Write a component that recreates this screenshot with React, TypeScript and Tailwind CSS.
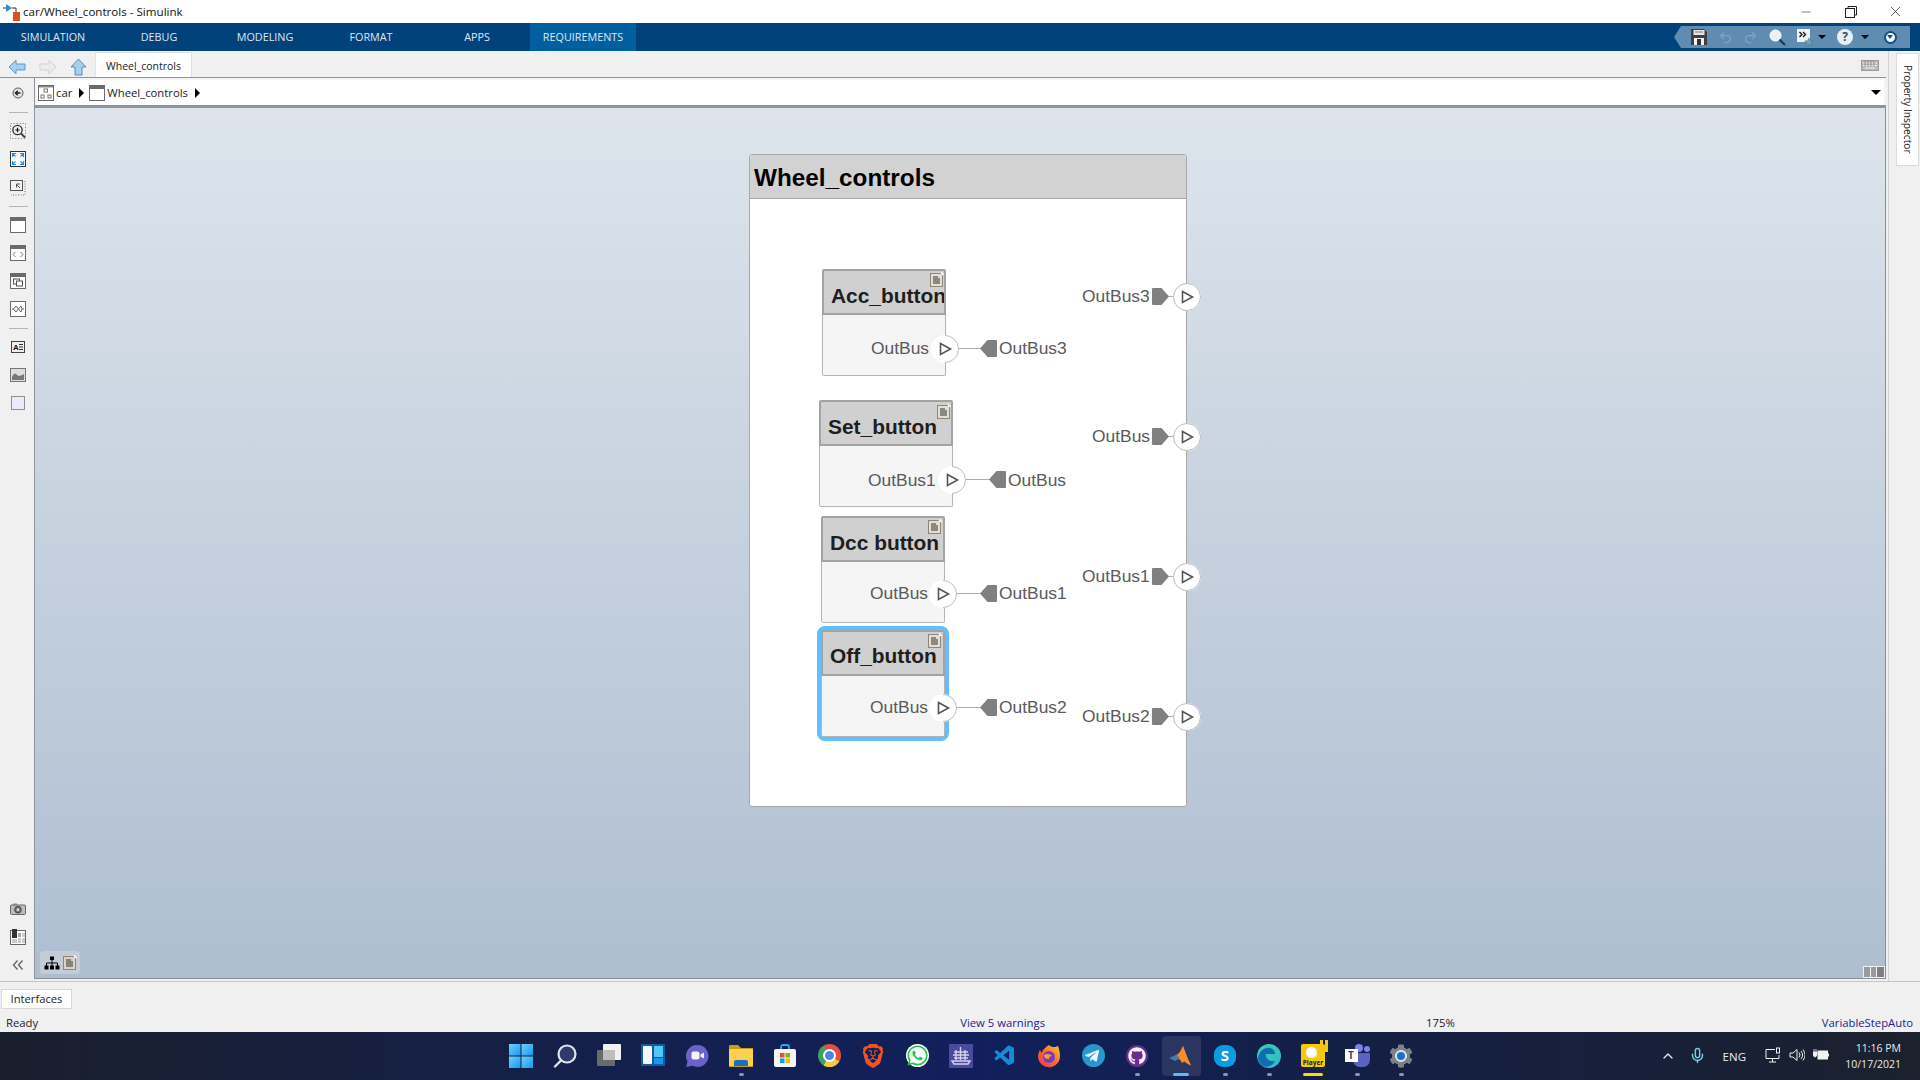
import React from "react";
import { Undo2, Redo2, Minus, X, ChevronUp, Mic } from "lucide-react";
import { FaWhatsapp, FaTelegramPlane, FaGithub, FaCog } from "react-icons/fa";
import { VscVscode } from "react-icons/vsc";
import { SiBrave } from "react-icons/si";

const Svg = ({ s = 16, h, children, className }: { s?: number; h?: number; children: React.ReactNode; className?: string }) => (
  <svg width={s} height={h ?? s} viewBox={`0 0 ${s} ${h ?? s}`} className={className} fill="none">
    {children}
  </svg>
);

function Note({ className }: { className: string }) {
  return (
    <div className={`absolute ${className}`}>
      <Svg s={14} h={15}>
        <rect x="0.5" y="1.5" width="12" height="13" fill="#e4dfd2" stroke="#8f8878" />
        <path d="M3 5h5M3 7h7M3 9h7M3 11h7" stroke="#333" />
        <path d="M11 0.5l2.5 2.5" stroke="#fff" strokeWidth="1.5" />
      </Svg>
    </div>
  );
}

function Port({ className, full }: { className: string; full?: boolean }) {
  return (
    <div className={`absolute w-[28px] h-[28px] ${className}`}>
      <Svg s={28}>
        <circle cx="14" cy="14" r="14" fill="#fff" />
        {full ? (
          <circle cx="14" cy="14" r="13.5" stroke="#bbbbbb" />
        ) : (
          <path d="M14 .5a13.5 13.5 0 0 1 0 27" stroke="#bbbbbb" />
        )}
        <path d="M9.5 8.5L19.5 14L9.5 19.5Z" stroke="#555555" strokeWidth="1.6" strokeLinejoin="miter" fill="#fff" />
      </Svg>
    </div>
  );
}

function Tag({ className, dir }: { className: string; dir: "l" | "r" }) {
  return (
    <div className={`absolute ${className}`}>
      <Svg s={17}>
        {dir === "r" ? (
          <path d="M1 0H9.5L17 8.5L9.5 17H1a1 1 0 0 1-1-1V1a1 1 0 0 1 1-1Z" fill="#808080" />
        ) : (
          <path d="M16 0H7.5L0 8.5L7.5 17H16a1 1 0 0 0 1-1V1a1 1 0 0 0-1-1Z" fill="#808080" />
        )}
      </Svg>
    </div>
  );
}

function Label({ className, children }: { className: string; children: React.ReactNode }) {
  return <div className={`absolute h-[22px] leading-[22px] text-[17.4px] text-[#5a5a5a] whitespace-nowrap ${className}`}>{children}</div>;
}

function Wire({ className }: { className: string }) {
  return <div className={`absolute h-px bg-[#adadad] ${className}`} />;
}

function Block({ className, title, nudge = "pt-[7px]" }: { className: string; title: string; nudge?: string }) {
  return (
    <div className={`absolute flex flex-col rounded-[2px] ${className}`}>
      <div className={`h-[46px] shrink-0 flex items-center overflow-hidden bg-[#d0d0d0] border-2 border-[#a3a3a3] rounded-t-[2px] pl-[7px] ${nudge}`}>
        <span className="text-[20.9px] font-bold text-[#1e1e1e] whitespace-nowrap">{title}</span>
      </div>
      <div className="flex-1 bg-[#f5f5f5] border border-t-0 border-[#b5b5b5] rounded-b-[2px]" />
    </div>
  );
}

function Side({ children }: { children: React.ReactNode }) {
  return <div className="h-[28px] w-full flex items-center justify-center">{children}</div>;
}
const Sep = ({ h }: { h: string }) => (
  <div className={`${h} w-full flex items-center justify-center`}>
    <div className="w-[19px] h-px bg-[#b5b5b5]" />
  </div>
);

const WinFrame = ({ children }: { children?: React.ReactNode }) => (
  <Svg s={16}>
    <rect x=".5" y=".5" width="15" height="15" fill="#fff" stroke="#6b6b6b" />
    <rect x="1" y="1" width="14" height="3" fill="#6b6b6b" />
    {children}
  </Svg>
);

function Sidebar() {
  return (
    <div className="w-[34px] shrink-0 flex flex-col pt-px pl-[2px]">
      <Side>
        <Svg s={12}>
          <circle cx="6" cy="6" r="5" fill="#e5e5e5" stroke="#5c5c5c" />
          <path d="M8.5 6H4M5.8 3.8L3.4 6l2.4 2.2" stroke="#222" strokeWidth="1.4" />
        </Svg>
      </Side>
      <Sep h="h-[10px]" />
      <Side>
        <Svg s={16}>
          <rect x=".5" y=".5" width="15" height="15" stroke="#999" strokeDasharray="1.5 1.5" />
          <circle cx="7.5" cy="7" r="4.6" fill="#f4f4f4" stroke="#333" strokeWidth="1.4" />
          <path d="M5.3 7h4.4M7.5 4.8v4.4" stroke="#111" strokeWidth="1.2" />
          <path d="M11 10.5l4 4" stroke="#444" strokeWidth="2" />
        </Svg>
      </Side>
      <Side>
        <Svg s={16}>
          <rect x=".5" y=".5" width="15" height="15" fill="#fff" stroke="#333" />
          <path d="M2.5 6V2.500h3.500M10 2.500h3.500V6M13.500 10v3.500H10M6 13.500H2.500V10M3 3l2.500 2.500M13 3l-2.500 2.500M13 13l-2.500-2.500M3 13l2.500-2.500" stroke="#1e88e5" strokeWidth="1.200" />
        </Svg>
      </Side>
      <Side>
        <div className="mt-[2px]">
          <Svg s={16}>
            <rect x=".5" y=".5" width="12" height="10" fill="#f2f2f2" stroke="#555" />
            <path d="M10 8L6 4M6.5 7.5V4h3.5" stroke="#555" />
            <path d="M15 1v14H1" stroke="#777" strokeDasharray="1 1.5" />
          </Svg>
        </div>
      </Side>
      <Sep h="h-[10px]" />
      <Side><WinFrame /></Side>
      <Side>
        <WinFrame>
          <path d="M5.5 7L3 9.5 5.5 12M10.5 7L13 9.5 10.5 12" stroke="#777" />
        </WinFrame>
      </Side>
      <Side>
        <WinFrame>
          <rect x="3.5" y="6" width="6" height="5" fill="#fff" stroke="#555" />
          <rect x="6.5" y="8" width="6" height="5" fill="#fff" stroke="#555" />
        </WinFrame>
      </Side>
      <Side>
        <Svg s={16}>
          <rect x=".5" y=".5" width="15" height="15" fill="#fff" stroke="#6b6b6b" />
          <path d="M2 8h1.500L6 5l2.500 3L11 5l1 3h2M6 11L3.500 8M6 11l2.500-3M11 11l-2.500-3M11 11l1-3" stroke="#666" />
        </Svg>
      </Side>
      <Sep h="h-[10px]" />
      <Side>
        <Svg s={14} h={12}>
          <rect x=".5" y=".5" width="13" height="11" fill="#eee" stroke="#444" />
          <text x="2" y="9" fontSize="8" fontWeight="700" fill="#111" fontFamily="Liberation Sans">A</text>
          <path d="M8 3.5h4M8 6h4M8 8.5h4" stroke="#333" />
        </Svg>
      </Side>
      <Side>
        <Svg s={16} h={14}>
          <rect x=".5" y=".5" width="15" height="13" fill="#ddd" stroke="#777" />
          <path d="M2 9q2-5 4-3t3 2 5-2v6H2Z" fill="#777" />
        </Svg>
      </Side>
      <Side>
        <div className="w-[14px] h-[14px] bg-[#eaeafa] border border-[#8f8f8f]" />
      </Side>
      <div className="mt-auto" />
      <Side>
        <Svg s={16} h={12}>
          <rect x=".5" y="2" width="15" height="9.5" rx="1" fill="#bdbdbd" stroke="#666" />
          <rect x="3" y=".5" width="4" height="2" fill="#888" />
          <circle cx="8" cy="6.7" r="3.3" fill="#777" stroke="#444" />
          <circle cx="8" cy="6.7" r="1.3" fill="#ddd" />
        </Svg>
      </Side>
      <Side>
        <Svg s={16}>
          <rect x=".5" y="1.5" width="15" height="14" fill="#fff" stroke="#666" />
          <rect x="8" y="4" width="3" height="4" fill="#aaa" /><rect x="12" y="4" width="3" height="4" fill="#ccc" />
          <rect x="8" y="9" width="3" height="5" fill="#ccc" /><rect x="12" y="9" width="3" height="5" fill="#ccc" />
          <rect x="2" y="0" width="5" height="9" fill="#333" /><rect x="2" y="10" width="5" height="4" fill="#ccc" />
        </Svg>
      </Side>
      <Side>
        <Svg s={12}>
          <path d="M5.5 1.5L1.5 6l4 4.5M10.5 1.5L6.5 6l4 4.5" stroke="#666" strokeWidth="1.4" />
        </Svg>
      </Side>
    </div>
  );
}

function Nav() {
  const arrow = (fill: string, stroke: string, d: string) => (
    <Svg s={18} h={16}><path d={d} fill={fill} stroke={stroke} /></Svg>
  );
  return (
    <div className="h-[27px] shrink-0 flex items-end border-b border-[#8e9499]">
      <div className="ml-[8px] h-[26px] pt-[5px] flex items-center">{arrow("#a7d0ec", "#5d9ac8", "M8 1L1 8l7 7v-4h9V5H8Z")}</div>
      <div className="ml-[13px] h-[26px] pt-[5px] flex items-center">{arrow("#ececec", "#d2d2d2", "M10 1l7 7-7 7v-4H1V5h9Z")}</div>
      <div className="ml-[13px] h-[26px] pt-[5px] flex items-center">
        <Svg s={17} h={18}><path d="M8.5 1L16 9h-4v8H5V9H1Z" fill="#a7d0ec" stroke="#4f8fc0" /></Svg>
      </div>
      <div className="ml-[8px] w-[97px] h-[25px] pt-[4px] bg-white border-x border-t border-[#e2e2e2] flex items-center justify-center text-[10.500px] text-[#222]">Wheel_controls</div>
      <div className="ml-auto mr-[7px] mb-[6px]">
        <Svg s={18} h={11}>
          <rect x=".5" y=".5" width="17" height="10" fill="#b9b9b9" stroke="#9a9a9a" />
          <path d="M2 3h14M2 5.500h14M4 8h10" stroke="#f2f2f2" />
          <path d="M4 1v5M7 1v5M10 1v5M13 1v5" stroke="#8a8a8a" />
        </Svg>
      </div>
    </div>
  );
}

function Address() {
  return (
    <div className="h-[30px] shrink-0 bg-[#f4f4f4] pt-[2px] pb-[3px] px-[2px] border-b-[3px] border-[#8d969f] flex">
      <div className="flex-1 bg-white flex items-center text-[11.300px] text-[#222] h-[25px] pt-px">
        <div className="ml-px">
          <Svg s={16}>
            <rect x=".5" y=".5" width="15" height="15" fill="#fff" stroke="#666" />
            <rect x="1" y="1" width="14" height="1.5" fill="#888" />
            <rect x="6" y="4" width="3.500" height="3" stroke="#777" />
            <rect x="3" y="10" width="3" height="3" stroke="#777" />
            <rect x="10" y="10" width="3" height="3" stroke="#777" />
          </Svg>
        </div>
        <span className="ml-[2px]">car</span>
        <div className="ml-[7px] w-0 h-0 border-y-[5px] border-y-transparent border-l-[5px] border-l-black" />
        <div className="ml-[5px]"><WinFrame /></div>
        <span className="ml-[2px]">Wheel_controls</span>
        <div className="ml-[7px] w-0 h-0 border-y-[5px] border-y-transparent border-l-[5px] border-l-black" />
        <div className="ml-auto mr-[3px] mb-[2px] w-0 h-0 border-x-[5px] border-x-transparent border-t-[5px] border-t-black" />
      </div>
    </div>
  );
}

function Diagram() {
  return (
    <>
      <div className="absolute left-[714px] top-[46px] w-[438px] h-[653px] bg-white border border-[#a8a8a8] rounded-[3px] overflow-hidden">
        <div className="h-[44px] bg-[#d2d2d2] border-b border-[#a8a8a8] flex items-center pl-[4px] pt-[4px]">
          <span className="text-[24.3px] font-bold text-black">Wheel_controls</span>
        </div>
      </div>

      <Block className="left-[787px] top-[161px] w-[124px] h-[107px]" title="Acc_button" />
      <Block className="left-[784px] top-[292px] w-[134px] h-[107px]" title="Set_button" />
      <Block className="left-[786px] top-[408px] w-[124px] h-[107px]" title="Dcc button" />
      <Block className="left-[786px] top-[522px] w-[124px] h-[107px] outline-4 outline-[#62bfff] rounded-[4px]" title="Off_button" nudge="pt-[5px]" />

      <Note className="left-[895px] top-[164px]" />
      <Note className="left-[902px] top-[296px]" />
      <Note className="left-[893px] top-[411px]" />
      <Note className="left-[893px] top-[525px]" />

      <Label className="left-[836px] top-[229px]">OutBus</Label>
      <Label className="left-[833px] top-[361px]">OutBus1</Label>
      <Label className="left-[835px] top-[474px]">OutBus</Label>
      <Label className="left-[835px] top-[588px]">OutBus</Label>

      <Wire className="left-[924px] w-[22px] top-[240px]" />
      <Wire className="left-[931px] w-[24px] top-[371px]" />
      <Wire className="left-[922px] w-[24px] top-[485px]" />
      <Wire className="left-[922px] w-[24px] top-[599px]" />

      <Port className="left-[896px] top-[227px]" />
      <Port className="left-[903px] top-[358px]" />
      <Port className="left-[894px] top-[472px]" />
      <Port className="left-[894px] top-[586px]" />

      <Tag dir="l" className="left-[945px] top-[232px]" />
      <Tag dir="l" className="left-[954px] top-[363px]" />
      <Tag dir="l" className="left-[945px] top-[477px]" />
      <Tag dir="l" className="left-[945px] top-[591px]" />

      <Label className="left-[964px] top-[229px]">OutBus3</Label>
      <Label className="left-[973px] top-[361px]">OutBus</Label>
      <Label className="left-[964px] top-[474px]">OutBus1</Label>
      <Label className="left-[964px] top-[588px]">OutBus2</Label>

      <Label className="left-[1047px] top-[177px]">OutBus3</Label>
      <Label className="left-[1057px] top-[317px]">OutBus</Label>
      <Label className="left-[1047px] top-[457px]">OutBus1</Label>
      <Label className="left-[1047px] top-[597px]">OutBus2</Label>

      <Tag dir="r" className="left-[1117px] top-[180px]" />
      <Tag dir="r" className="left-[1117px] top-[320px]" />
      <Tag dir="r" className="left-[1117px] top-[460px]" />
      <Tag dir="r" className="left-[1117px] top-[600px]" />

      <Wire className="left-[1134px] w-[5px] top-[188px]" />
      <Wire className="left-[1134px] w-[5px] top-[328px]" />
      <Wire className="left-[1134px] w-[5px] top-[468px]" />
      <Wire className="left-[1134px] w-[5px] top-[608px]" />

      <Port full className="left-[1138px] top-[175px]" />
      <Port full className="left-[1138px] top-[315px]" />
      <Port full className="left-[1138px] top-[455px]" />
      <Port full className="left-[1138px] top-[595px]" />

      <div className="absolute left-[5px] top-[843px] w-[40px] h-[23px] rounded-[4px] bg-[#c3ccd7] flex items-center justify-center gap-[3px]">
        <Svg s={16} h={14}>
          <rect x="6" y="0.500" width="4" height="3.500" fill="#000" />
          <path d="M8 4v3M2.500 10V7h11v3M8 7v3" stroke="#000" />
          <rect x="0.500" y="9.500" width="4" height="4" fill="#000" /><rect x="6" y="9.500" width="4" height="4" fill="#000" /><rect x="11.500" y="9.500" width="4" height="4" fill="#000" />
        </Svg>
        <Svg s={14} h={15}>
          <rect x="0.500" y="1.500" width="12" height="13" fill="#d9d4c6" stroke="#8f8878" />
          <path d="M3 5h5M3 7h7M3 9h7M3 11h7" stroke="#333" />
          <path d="M11 0.500l2.500 2.500" stroke="#fff" strokeWidth="1.500" />
        </Svg>
      </div>

      <div className="absolute right-0 bottom-0 w-[22px] h-[12px] bg-white/80 flex gap-px p-px">
        <div className="w-[6px] bg-[#9a9a9a]" /><div className="w-[5px] bg-[#9a9a9a]" /><div className="flex-1 bg-[#808080]" />
      </div>
    </>
  );
}

function Quick() {
  const caret = <div className="w-0 h-0 border-x-[4px] border-x-transparent border-t-[4px] border-t-black" />;
  return (
    <div className="ml-auto mr-[10px] w-[236px] h-[22px] bg-[#5f8cb0] flex items-center pl-[12px] [clip-path:polygon(0_50%,7px_0,100%_0,100%_100%,7px_100%)]">
      <div className="w-[26px] flex justify-center">
        <Svg s={16}>
          <path d="M0 0h13l3 3v13H0Z" fill="#3f3f3f" />
          <rect x="2.500" y="1" width="11" height="5" fill="#e6e6e6" />
          <path d="M4 3h8" stroke="#777" />
          <rect x="3" y="9" width="10" height="7" fill="#f2f2f2" />
          <rect x="6" y="10" width="4" height="6" fill="#333" />
        </Svg>
      </div>
      <div className="w-[26px] flex justify-center"><Undo2 size={15} color="#7ca6c4" strokeWidth={2} /></div>
      <div className="w-[24px] flex justify-center"><Redo2 size={15} color="#7ca6c4" strokeWidth={2} /></div>
      <div className="w-[30px] flex justify-center">
        <Svg s={17}>
          <circle cx="6.500" cy="6.500" r="5.500" fill="#e8f1f8" stroke="#fff" />
          <path d="M10.500 10.500L16 16" stroke="#173a5e" strokeWidth="2.200" />
        </Svg>
      </div>
      <div className="w-[26px] flex justify-center">
        <Svg s={17}>
          <rect x="0" y="0" width="13" height="13" fill="#eef2f5" />
          <path d="M2.500 3l2.500 2.500L2.500 8M6 3l2.500 2.500L6 8" stroke="#111" strokeWidth="1.300" />
          <path d="M12 9l1.300 2.700 3 .3-2.200 2 .7 3-2.800-1.600-2.800 1.600.7-3-2.200-2 3-.3Z" fill="#7b9fba" stroke="#3e6c90" strokeWidth=".5" />
        </Svg>
      </div>
      <div className="w-[8px] flex justify-center">{caret}</div>
      <div className="w-[7px]" />
      <div className="w-[24px] flex justify-center">
        <div className="w-[16px] h-[16px] rounded-full bg-[#e8f0f6] flex items-center justify-center text-[12px] font-bold text-[#33506b]">?</div>
      </div>
      <div className="w-[16px] flex justify-center">{caret}</div>
      <div className="w-[34px] flex justify-center">
        <div className="w-[13px] h-[13px] rounded-full bg-white border-2 border-[#0e4f86] flex items-center justify-center">
          <div className="w-0 h-0 border-x-[3px] border-x-transparent border-t-[4px] border-t-[#0e4f86]" />
        </div>
      </div>
    </div>
  );
}

function TaskIcon({ children, dot, active }: { children: React.ReactNode; dot?: React.ReactNode; active?: boolean }) {
  return (
    <div className="relative w-[44px] h-[48px] flex items-center justify-center">
      {active && <div className="absolute left-[3px] top-[4px] w-[39px] h-[40px] rounded-[4px] bg-white/10" />}
      <div className="relative -mt-[1px]">{children}</div>
      <div className="absolute left-0 right-0 bottom-[4px] flex justify-center">{dot}</div>
    </div>
  );
}
const D = ({ className = "w-[5px] bg-[#8f96a3]" }: { className?: string }) => <div className={`h-[3px] rounded-full ${className}`} />;

function Taskbar() {
  return (
    <div className="h-[48px] shrink-0 flex items-center bg-[linear-gradient(90deg,#1a1f2d_0%,#14204a_30%,#11205c_50%,#141f46_70%,#1b212d_100%)] relative">
      <div className="ml-[499px] flex">
        <TaskIcon>
          <Svg s={24}>
            <defs><linearGradient id="w" x1="0" y1="0" x2="1" y2="1"><stop offset="0" stopColor="#6bd3fb" /><stop offset="1" stopColor="#1a96f0" /></linearGradient></defs>
            <rect width="11.500" height="11.500" fill="url(#w)" /><rect x="12.500" width="11.500" height="11.500" fill="url(#w)" />
            <rect y="12.500" width="11.500" height="11.500" fill="url(#w)" /><rect x="12.500" y="12.500" width="11.500" height="11.500" fill="url(#w)" />
          </Svg>
        </TaskIcon>
        <TaskIcon>
          <Svg s={24}>
            <circle cx="14" cy="10" r="8.500" fill="#2d3a6a" stroke="#dfe4ea" strokeWidth="2.200" />
            <path d="M8 16.500L2 22.500" stroke="#dfe4ea" strokeWidth="2.400" strokeLinecap="round" />
          </Svg>
        </TaskIcon>
        <TaskIcon>
          <Svg s={24}>
            <rect x="6" y="0" width="18" height="16" rx="1" fill="#f1f1f1" />
            <rect x="0" y="6" width="18" height="16" rx="1" fill="#6a6a6a" />
            <rect x="6" y="6" width="12" height="10" fill="#bdbdbd" />
          </Svg>
        </TaskIcon>
        <TaskIcon>
          <Svg s={24}>
            <rect width="24" height="22" rx="1" fill="#0c5ea8" />
            <rect x="2" y="2" width="9" height="18" rx="1" fill="#f4f8fc" />
            <rect x="13" y="2" width="9" height="11" fill="#57c6f5" />
            <rect x="13" y="14" width="9" height="6" fill="#1f95ea" />
          </Svg>
        </TaskIcon>
        <TaskIcon>
          <Svg s={24}>
            <path d="M12.500 1a11 11 0 1 1 -5 20.800L1 23l1.500-5.500A11 11 0 0 1 12.500 1Z" fill="#6a62c8" />
            <rect x="6.500" y="7.500" width="8" height="8" rx="2" fill="#f4f3fd" />
            <path d="M15.500 10.500l3.500-2v6l-3.500-2Z" fill="#f4f3fd" />
          </Svg>
        </TaskIcon>
        <TaskIcon dot={<D />}>
          <Svg s={24} h={23}>
            <path d="M0 2a1 1 0 0 1 1-1h8l3 3h12v19H0Z" fill="#c99a1c" />
            <rect y="5" width="24" height="17" rx="1" fill="#fbd24f" />
            <path d="M5 22v-4a2 2 0 0 1 2-2h10a2 2 0 0 1 2 2v4Z" fill="#1a6fc0" />
          </Svg>
        </TaskIcon>
        <TaskIcon>
          <Svg s={24}>
            <path d="M8 6V3a2 2 0 0 1 2-2h4a2 2 0 0 1 2 2v3" stroke="#2aa7e8" strokeWidth="1.800" />
            <rect x="1" y="5" width="22" height="18" rx="2" fill="#f4f4f4" />
            <rect x="7" y="9" width="4.500" height="4.500" fill="#f25022" /><rect x="12.500" y="9" width="4.500" height="4.500" fill="#7fba00" />
            <rect x="7" y="14.500" width="4.500" height="4.500" fill="#00a4ef" /><rect x="12.500" y="14.500" width="4.500" height="4.500" fill="#ffb900" />
          </Svg>
        </TaskIcon>
        <TaskIcon>
          <div className="w-[23px] h-[23px] rounded-full bg-[conic-gradient(#e14f40_0deg_120deg,#f5c93f_120deg_210deg,#3da35a_210deg_330deg,#e14f40_330deg)] flex items-center justify-center">
            <div className="w-[9px] h-[9px] rounded-full bg-[#4a86e8] border-2 border-white box-content" />
          </div>
        </TaskIcon>
        <TaskIcon><SiBrave size={24} color="#f2521f" /></TaskIcon>
        <TaskIcon>
          <div className="w-[23px] h-[23px] rounded-full bg-white flex items-center justify-center"><FaWhatsapp size={23} color="#27c24b" /></div>
        </TaskIcon>
        <TaskIcon>
          <Svg s={24}>
            <rect width="24" height="24" rx="1" fill="#4b4a9c" />
            <path d="M3 17h18l-2 3H5ZM11.500 3v13M7 6v10M16 6v10M5 8h14M4 11h16M5 14h14" stroke="#d3d3ee" strokeWidth="1.400" />
          </Svg>
        </TaskIcon>
        <TaskIcon><VscVscode size={24} color="#1a8ad8" /></TaskIcon>
        <TaskIcon>
          <Svg s={24}>
            <defs><linearGradient id="ff" x1="1" y1="0" x2="0" y2="1"><stop offset="0" stopColor="#ffc43a" /><stop offset=".5" stopColor="#ff6b2a" /><stop offset="1" stopColor="#e8305c" /></linearGradient></defs>
            <path d="M12 1c3 3 7 2 9 1 1 3 2 6 2 10A11 11 0 1 1 3 6l1.500 3C6 5 9 3 12 1Z" fill="url(#ff)" />
            <circle cx="12" cy="13" r="6" fill="#6d3fc9" />
            <path d="M7 11c3-2 7-1 8 1-2 0-3 1-3 3-3 0-5-1-5-4Z" fill="#ff9a2a" />
          </Svg>
        </TaskIcon>
        <TaskIcon>
          <div className="w-[23px] h-[23px] rounded-full bg-[#2697cf] flex items-center justify-center pr-[2px]"><FaTelegramPlane size={16} color="#eaf6fc" /></div>
        </TaskIcon>
        <TaskIcon dot={<D />}>
          <div className="w-[22px] h-[22px] rounded-full bg-[#6a2c91] flex items-center justify-center"><FaGithub size={18} color="#f2f2f2" /></div>
        </TaskIcon>
        <TaskIcon active dot={<D className="w-[16px] bg-[#4fc3f7]" />}>
          <Svg s={24} h={22}>
            <path d="M0 13l7-3 4-3 3-6 5 15 3 5-5-3-3-2-2 0-6-5Z" fill="#d9642a" />
            <path d="M14 1l-3 6-2 3 4 8 3-2 3 3 3 1-3-6Z" fill="#f0912f" />
            <path d="M0 13l7-3 3 4-4 2Z" fill="#3d7db8" />
          </Svg>
        </TaskIcon>
        <TaskIcon dot={<D />}>
          <div className="w-[22px] h-[22px] rounded-[9px] bg-[#0b9be0] flex items-center justify-center text-white text-[15px] font-bold leading-none">S</div>
        </TaskIcon>
        <TaskIcon dot={<D />}>
          <Svg s={24}>
            <defs><linearGradient id="ed" x1="0" y1="0" x2="1" y2="1"><stop offset="0" stopColor="#3ad0a0" /><stop offset="1" stopColor="#2fb8d8" /></linearGradient></defs>
            <circle cx="12" cy="12" r="12" fill="url(#ed)" />
            <path d="M1 14C2 7 8 3 13 4c4 1 5 4 5 6H9c-1 4 3 8 9 7-3 6-10 7-13 4-3-2-4-5-4-7Z" fill="#0f6cb5" />
          </Svg>
        </TaskIcon>
        <TaskIcon dot={<D className="w-[20px] bg-[#ffdb00]" />}>
          <div className="relative w-[24px] h-[23px] bg-[#f6c90e] rounded-[2px] flex flex-col items-center justify-end">
            <div className="absolute left-[5px] top-[3px] w-[11px] h-[11px] rounded-full bg-white" />
            <span className="text-[6.500px] font-bold text-[#222] leading-none mb-[1px]">Player</span>
            <div className="absolute -right-[3px] -top-[4px] flex gap-[2px]">
              <div className="w-[3px] h-[12px] bg-[#f6c90e]" /><div className="w-[3px] h-[12px] bg-[#f6c90e]" />
            </div>
          </div>
        </TaskIcon>
        <TaskIcon dot={<D />}>
          <div className="relative w-[25px] h-[24px]">
            <div className="absolute right-0 top-[2px] w-[6px] h-[6px] rounded-full bg-[#7b83eb]" />
            <div className="absolute left-[10px] top-0 w-[8px] h-[8px] rounded-full bg-[#7b83eb]" />
            <div className="absolute left-[8px] right-0 top-[9px] bottom-[1px] rounded-b-[7px] bg-[#5a62c4]" />
            <div className="absolute left-0 top-[5px] w-[13px] h-[13px] bg-white text-[#333a8a] text-[10px] font-bold leading-[13px] text-center">T</div>
          </div>
        </TaskIcon>
        <TaskIcon dot={<D />}>
          <div className="relative w-[24px] h-[24px]">
            <FaCog size={24} color="#7b8289" />
            <div className="absolute left-[6px] top-[6px] w-[12px] h-[12px] rounded-full bg-[#1c6fc2] border-2 border-[#dfe5ea]" />
          </div>
        </TaskIcon>
      </div>
      <div className="absolute right-[19px] top-0 h-[48px] text-white">
        <div className="absolute right-[225px] top-[16px]"><ChevronUp size={16} color="#e6e6e6" /></div>
        <div className="absolute right-[195px] top-[15px]"><Mic size={17} color="#77cfe8" /></div>
        <div className="absolute right-[155px] top-[16px] text-[11.500px] text-[#eee] whitespace-nowrap">ENG</div>
        <div className="absolute right-[120px] top-[15px]">
          <Svg s={16}>
            <path d="M10 2.500H1v9h13V8M4 15h7M7.500 12v3" stroke="#f1f1f1" />
            <rect x="11.500" y="1" width="3" height="5" stroke="#f1f1f1" />
          </Svg>
        </div>
        <div className="absolute right-[96px] top-[16px]">
          <Svg s={16} h={14}>
            <path d="M1 5h3l4-3.500v11L4 9H1Z" stroke="#f1f1f1" />
            <path d="M10 4.500a4 4 0 0 1 0 5M12 3a6.500 6.500 0 0 1 0 8M14 1.500a9 9 0 0 1 0 11" stroke="#f1f1f1" />
          </Svg>
        </div>
        <div className="absolute right-[72px] top-[17px]">
          <Svg s={16} h={12}>
            <rect x="5" y="2" width="9.500" height="8" stroke="#f1f1f1" fill="#f1f1f1" />
            <rect x="14.500" y="4.500" width="1.500" height="3" fill="#f1f1f1" />
            <path d="M0 3h4v3l-1.500 2H1.500L0 6ZM1 0v3M3 0v3" fill="#f1f1f1" stroke="#f1f1f1" strokeWidth=".8" />
          </Svg>
        </div>
        <div className="text-right text-[10.500px] leading-[16px] text-[#eaeaea] pt-[8px] whitespace-nowrap">
          <div>11:16 PM</div>
          <div>10/17/2021</div>
        </div>
      </div>
    </div>
  );
}

export default function App() {
  return (
    <div className="w-[1920px] h-[1080px] flex flex-col overflow-hidden bg-[#f0f0f0] font-['Open_Sans',sans-serif]">
      <div className="h-[23px] shrink-0 bg-white flex items-center relative">
        <div className="ml-[3px] w-[18px]">
          <Svg s={18}>
            <path d="M3 1l6 4-6 4Z" fill="#3b87c4" />
            <path d="M0 5h3M9 5h4v6" stroke="#333" />
            <rect x="10" y="9" width="7" height="9" fill="#d9531e" />
          </Svg>
        </div>
        <span className="ml-[2px] text-[11.600px] text-[#111]">car/Wheel_controls - Simulink</span>
        <div className="ml-auto mr-[2px] flex items-center">
          <div className="w-[45px] flex justify-center"><Minus size={14} color="#222" strokeWidth={1} /></div>
          <div className="w-[45px] flex justify-center">
            <Svg s={12}>
              <rect x=".5" y="2.500" width="9" height="9" stroke="#222" />
              <path d="M3 2V.5h8.500V9H10" stroke="#222" />
            </Svg>
          </div>
          <div className="w-[45px] flex justify-center"><X size={17} color="#222" strokeWidth={1} /></div>
        </div>
      </div>

      <div className="h-[28px] shrink-0 bg-[#01427a] flex items-center text-[10.800px] text-[#dbe8f2]">
        <div className="w-[106px] text-center">SIMULATION</div>
        <div className="w-[106px] text-center">DEBUG</div>
        <div className="w-[106px] text-center">MODELING</div>
        <div className="w-[106px] text-center">FORMAT</div>
        <div className="w-[106px] text-center">APPS</div>
        <div className="w-[106px] h-full bg-[#00609f] flex items-center justify-center">REQUIREMENTS</div>
        <Quick />
      </div>

      <div className="h-[931px] shrink-0 flex border-b border-[#c4c4c4]">
        <div className="w-[1886px] shrink-0 flex flex-col pb-[2px]">
          <Nav />
          <div className="flex-1 flex min-h-0">
            <Sidebar />
            <div className="flex-1 flex flex-col border-l border-[#8d969f]">
              <Address />
              <div className="flex-1 relative border-r border-b border-[#858d96] bg-[linear-gradient(180deg,#dde4ec_0%,#aebed1_100%)] font-['Liberation_Sans',sans-serif]">
                <Diagram />
              </div>
            </div>
          </div>
        </div>
        <div className="flex-1 ml-[2px] border-l border-[#d2d2d2] pl-[7px] pt-[2px]">
          <div className="w-[23px] h-[113px] bg-white border border-[#dcdcdc] flex items-center justify-center">
            <span className="[writing-mode:vertical-rl] text-[10.200px] text-[#222] whitespace-nowrap">Property Inspector</span>
          </div>
        </div>
      </div>

      <div className="flex-1 relative min-h-0">
        <div className="absolute left-[1px] top-[7px] w-[71px] h-[20px] pt-px bg-white border border-[#d8d8d8] flex items-center justify-center text-[11.200px] text-[#222]">Interfaces</div>
        <div className="absolute left-0 right-0 bottom-0 h-[18px] flex items-center text-[11.300px]">
          <span className="ml-[6px] text-[#222]">Ready</span>
          <span className="ml-[922px] text-[#23238e]">View 5 warnings</span>
          <span className="ml-[381px] text-[#222]">175%</span>
          <span className="ml-auto mr-[7px] text-[#23238e]">VariableStepAuto</span>
        </div>
      </div>

      <Taskbar />
    </div>
  );
}
